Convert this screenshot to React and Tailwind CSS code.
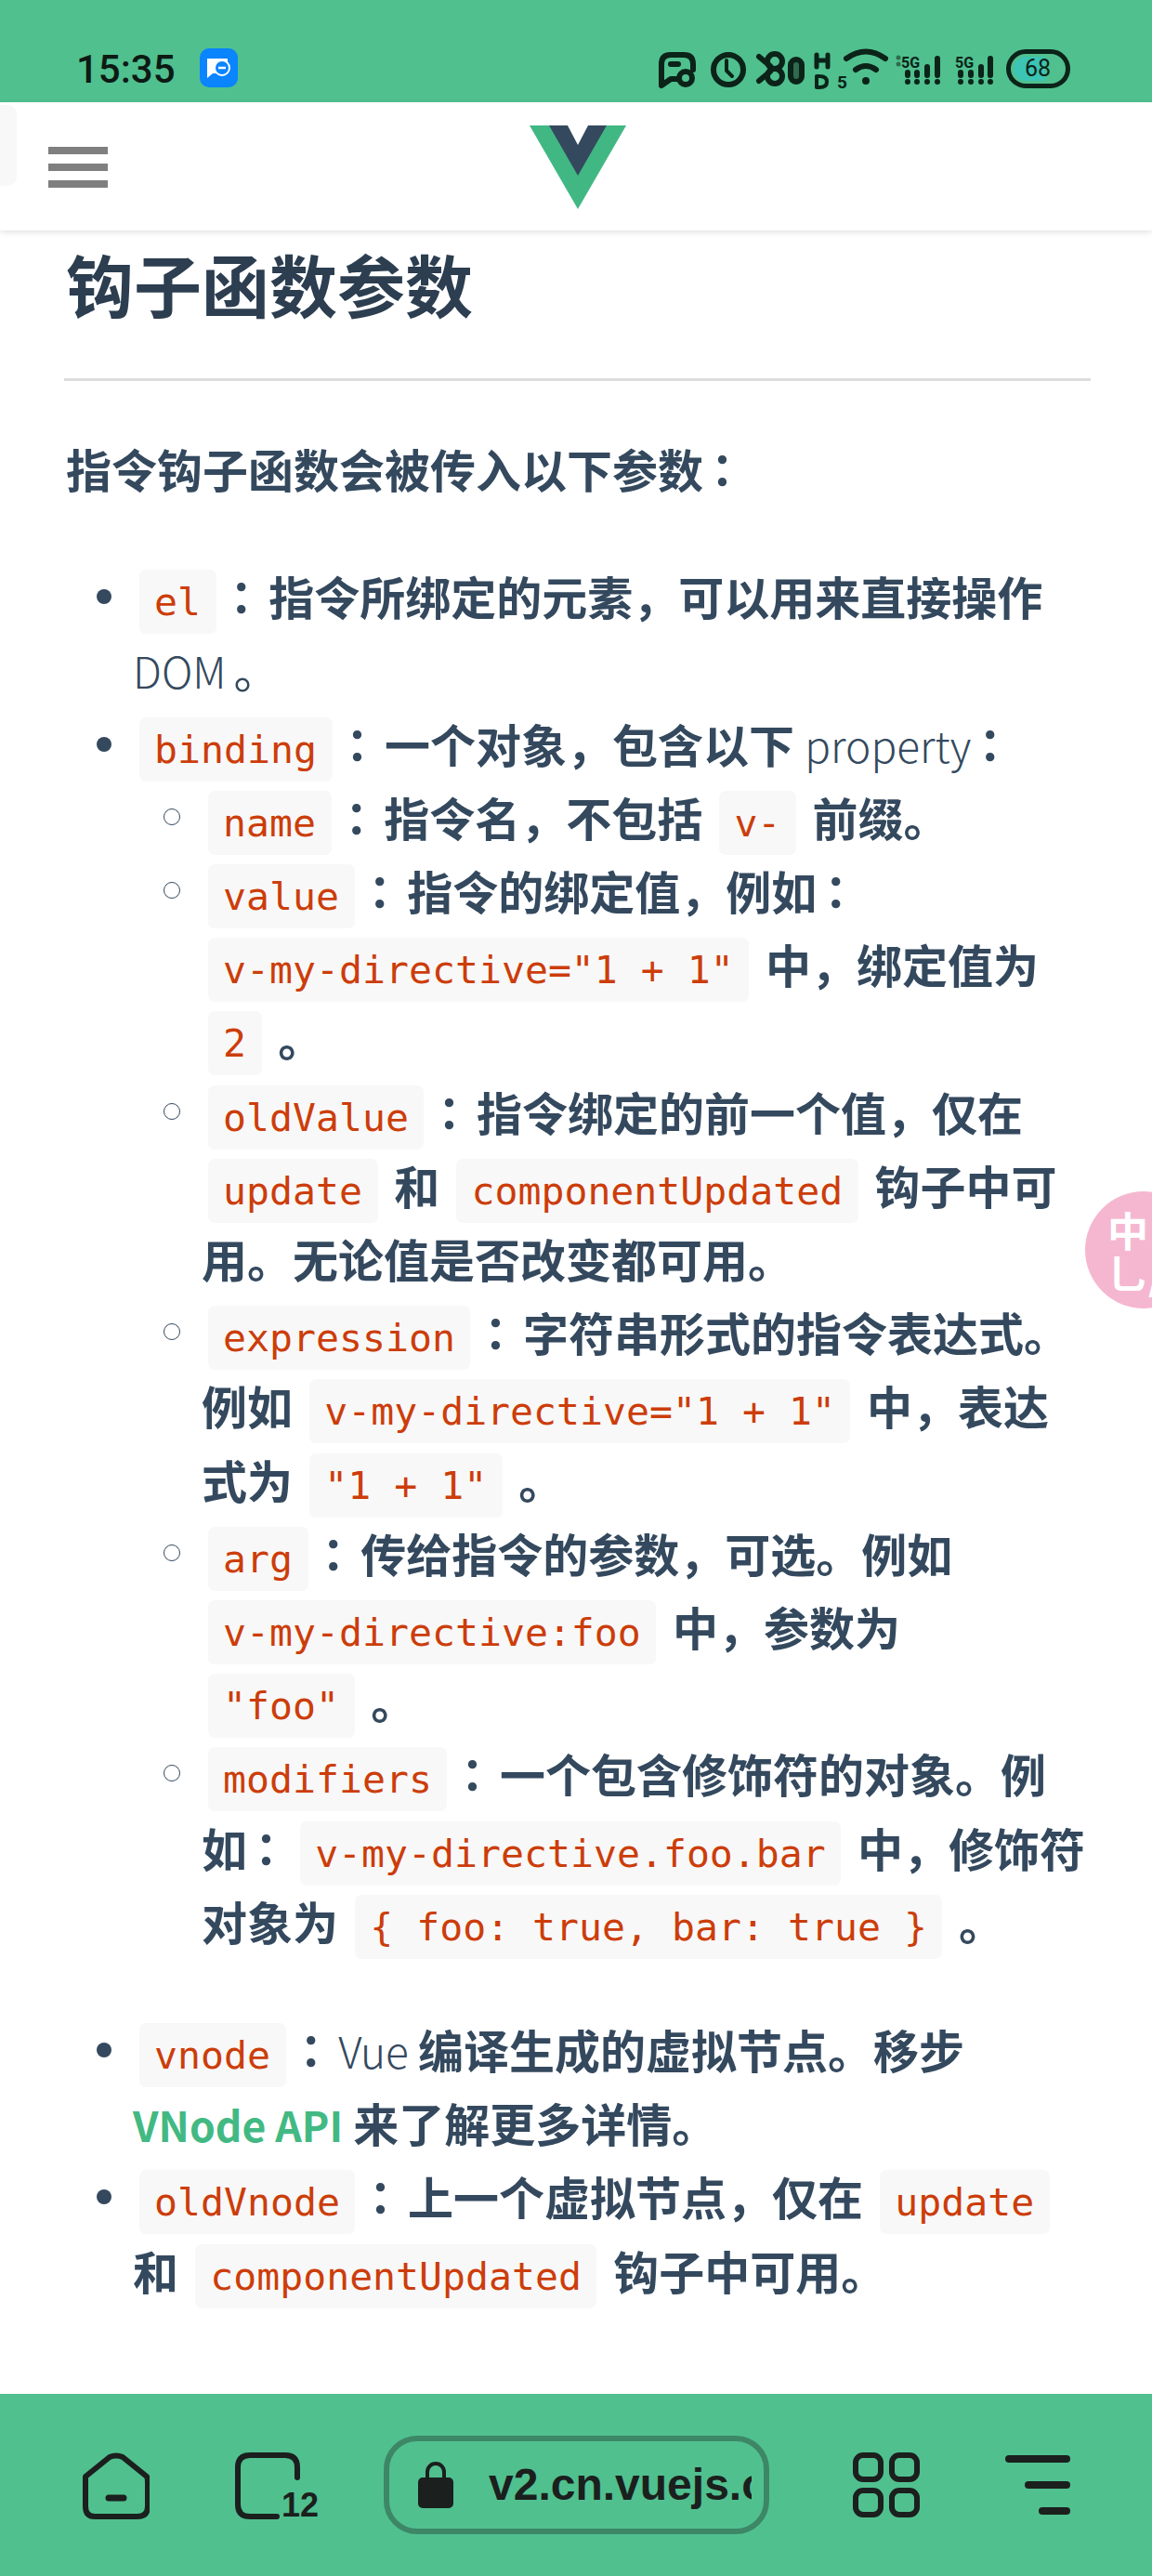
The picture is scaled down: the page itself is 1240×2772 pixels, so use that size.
import React from 'react';

const Code = ({ children }) => (
  <code className="mx-[6.6px] whitespace-pre rounded-[7px] bg-[#f8f8f8] px-[16.5px] py-[10px] font-['DejaVu_Sans_Mono',monospace] text-[41.5px] font-normal leading-none text-[#cc3d0a]">
    {children}
  </code>
);

const B = ({ children }) => <strong className="font-bold">{children}</strong>;

const Thin = ({ children }) => <span className="text-[46px] font-light leading-none">{children}</span>;

// the reference draws the fullwidth colon centred in its cell
const Colon = () => <strong className="ml-[-4px] mr-[5px] font-['Noto_Sans_CJK_TC',sans-serif] font-bold">：</strong>;

const Item = ({ children }) => (
  <li className="relative">
    <span className="absolute left-[-39px] top-[33px] h-[16px] w-[16px] rounded-full bg-[#34495e]" />
    {children}
  </li>
);

const SubItem = ({ children }) => (
  <li className="relative">
    <span className="absolute left-[-41px] top-[31px] h-[18px] w-[18px] rounded-full border-[1.5px] border-[#34495e]" />
    {children}
  </li>
);

const StatusIcons = () => (
  <svg width="368" height="50" viewBox="0 0 368 50" fill="none" stroke="#0b2318" strokeWidth="6" strokeLinecap="round" strokeLinejoin="round">
    {/* chat bubble */}
    <path d="M3 43V20q0-10 10-10h14q10 0 10 10v6M3 43l10-7h7" />
    <path d="M13 20h8" />
    <circle cx="29" cy="35" r="7" />
    {/* alarm */}
    <circle cx="75" cy="26" r="16" />
    <path d="M73 16v11l6 6" strokeWidth="4" />
    {/* do not disturb / vibrate */}
    <circle cx="125" cy="17" r="8" />
    <circle cx="125" cy="33" r="8" />
    <path d="M108 12l12 10M108 38l12-10" />
    <rect x="142" y="15" width="12" height="24" rx="6" fill="#2f6c4f" />
    {/* HD */}
    <path d="M170 10v13M182 10v13M170 16h12" strokeWidth="5" />
    <path d="M170 33v12h3q8 0 8-6t-8-6z" strokeWidth="4" />
    {/* wifi */}
    <path d="M202 14q21-15 42 0M212 26q11-8 22 0" />
    <circle cx="223" cy="38" r="4" fill="#0b2318" stroke="none" />
    <text x="192" y="46" fontFamily="Roboto, sans-serif" fontSize="19" fontWeight="700" fill="#0b2318" stroke="none">5</text>
    {/* signal 1 */}
    <text x="261" y="24" fontFamily="Roboto, sans-serif" fontSize="16" fontWeight="700" fill="#0b2318" stroke="none">5G</text>
    <circle cx="258" cy="13" r="2.500" fill="#2f6c4f" stroke="none" />
    <circle cx="258" cy="20" r="2.500" fill="#2f6c4f" stroke="none" />
    <path d="M268 29v3M278 29v3M289 23v9M300 14v18" />
    <path d="M268 39v.1M278 39v.1M289 39v.1M300 39v.1" />
    {/* signal 2 */}
    <text x="319" y="24" fontFamily="Roboto, sans-serif" fontSize="16" fontWeight="700" fill="#0b2318" stroke="none">5G</text>
    <path d="M325 29v3M336 29v3M347 23v9M357 14v18" />
    <path d="M325 39v.1M336 39v.1M347 39v.1M357 39v.1" />
  </svg>
);

const Battery = () => (
  <div className="relative ml-[6px] h-[42px] w-[69px] rounded-[21px] border-[5px] border-[#0b2318] p-[3px]">
    <div className="h-full w-[34px] rounded-l-[14px] bg-[#3cc4b4]" />
    <span className="absolute inset-0 flex items-center justify-center font-['Roboto',sans-serif] text-[25px] text-[#0b2318]">68</span>
  </div>
);

const StatusBar = () => (
  <div className="flex h-[110px] shrink-0 items-start bg-[#50c08f] pl-[82px] pt-[52px]">
    <span className="font-['Roboto',sans-serif] text-[42px] font-medium leading-[46px] text-[#0d1a14]">15:35</span>
    <div className="ml-[26px] flex h-[42px] w-[41px] items-center justify-center rounded-[10px] bg-[#0a84ff]">
      <svg width="26" height="24" viewBox="0 0 26 24">
        <path d="M1 2h22v16H7l-6 5z" fill="#fff" />
        <circle cx="17" cy="12" r="8" fill="#0a84ff" stroke="#fff" strokeWidth="2" />
        <path d="M13 12h8" stroke="#fff" strokeWidth="2.500" />
      </svg>
    </div>
    <div className="ml-[453px] mt-[-3px] flex items-center">
      <StatusIcons />
      <Battery />
    </div>
  </div>
);

const Header = () => (
  <header className="relative z-10 flex h-[138px] shrink-0 items-start bg-white shadow-[0_2px_6px_rgba(0,0,0,0.12)]">
    <div className="absolute left-0 top-[3px] h-[87px] w-[18px] rounded-r-[10px] bg-[#f8f8f8]" />
    <div className="ml-[52px] mt-[48px] flex w-[64px] flex-col gap-[10px]">
      <div className="h-[8px] bg-[#7f7f7f]" />
      <div className="h-[8px] bg-[#7f7f7f]" />
      <div className="h-[8px] bg-[#7f7f7f]" />
    </div>
    <svg className="ml-[454px] mt-[25px]" width="104" height="90" viewBox="0 0 104 90">
      <path d="M0 0h104L52 90z" fill="#41b883" />
      <path d="M21 0h62L52 54z" fill="#35495e" />
      <path d="M41 0h22L52 21z" fill="#fff" />
    </svg>
  </header>
);

const BottomBar = () => (
  <div className="flex h-[196px] shrink-0 items-start bg-[#50c08f]">
    <svg className="ml-[89px] mt-[63px]" width="72" height="72" viewBox="0 0 72 72" fill="none" stroke="#1b1f1d" strokeWidth="6" strokeLinejoin="round">
      <path d="M3 26 29 5q7-3 14 0l26 21q1 2 1 6v26q0 11-11 11H13Q3 69 3 58V32q0-4 0-6z" />
      <path d="M28 49h16" strokeWidth="7" strokeLinecap="round" />
    </svg>
    <div className="relative ml-[92px] mt-[63px] h-[72px] w-[70px]">
      <svg width="70" height="72" viewBox="0 0 70 72" fill="none" stroke="#1b1f1d" strokeWidth="6" strokeLinecap="round">
        <path d="M67 27V16Q67 3 54 3H16Q3 3 3 16v40q0 13 13 13h29" />
      </svg>
      <span className="absolute left-[50px] top-[39px] font-['Liberation_Sans',sans-serif] text-[36px] font-bold leading-[36px] text-[#1b1f1d]">12</span>
    </div>
    <div className="ml-[90px] mt-[45px] flex h-[106px] w-[415px] items-center overflow-hidden rounded-[36px] border-[6px] border-[#3d8766] pl-[31px]">
      <svg className="shrink-0" width="38" height="50" viewBox="0 0 38 50">
        <path d="M10 22V11a9 9 0 0 1 18 0v11" fill="none" stroke="#1b1f1d" strokeWidth="4" />
        <rect x="0" y="17" width="38" height="33" rx="5" fill="#1b1f1d" />
      </svg>
      <div className="ml-[38px] w-[283px] shrink-0 overflow-hidden whitespace-nowrap font-['Liberation_Sans',sans-serif] text-[48px] font-bold leading-[60px] text-[#1b1f1d]">
        v2.cn.vuejs.org
      </div>
    </div>
    <div className="ml-[90px] mt-[63px] grid h-[70px] w-[72px] grid-cols-2 gap-[6px]">
      <div className="rounded-[11px] border-[6px] border-[#1b1f1d]" />
      <div className="rounded-[11px] border-[6px] border-[#1b1f1d]" />
      <div className="rounded-[11px] border-[6px] border-[#1b1f1d]" />
      <div className="rounded-[11px] border-[6px] border-[#1b1f1d]" />
    </div>
    <div className="ml-[92px] mt-[66px] flex w-[70px] flex-col items-end gap-[20px]">
      <div className="h-[8px] w-[70px] rounded-full bg-[#1b1f1d]" />
      <div className="h-[8px] w-[49px] rounded-full bg-[#1b1f1d]" />
      <div className="h-[8px] w-[34px] rounded-full bg-[#1b1f1d]" />
    </div>
  </div>
);

const Content = () => (
  <main className="relative flex-1 overflow-hidden bg-white pl-[69px] pr-[66px] font-['Noto_Sans_CJK_SC','Noto_Sans',sans-serif] text-[49px] leading-[79.2px] text-[#34495e]">
    <h3 className="h-[162px] border-b-[3px] border-[#dddddd] pl-[2px] pt-[16px] text-[73px] font-bold leading-[80px] text-[#2c3e50]">钩子函数参数</h3>
    <p className="mt-[54px] pl-[2px] font-bold">指令钩子函数会被传入以下参数<Colon /></p>
    <ul className="mt-[58px] whitespace-nowrap pl-[74px]">
      <Item>
        <Code>el</Code><Colon /><B>指令所绑定的元素，可以用来直接操作</B><br />
        <Thin>DOM</Thin><span className="ml-[8px]">。</span>
      </Item>
      <Item>
        <Code>binding</Code><Colon /><B>一个对象，包含以下 </B><Thin>property</Thin><Colon />
        <ul className="pl-[74px]">
          <SubItem><Code>name</Code><Colon /><B>指令名，不包括 </B><Code>v-</Code><B> 前缀。</B></SubItem>
          <SubItem>
            <Code>value</Code><Colon /><B>指令的绑定值，例如</B><Colon /><br />
            <Code>v-my-directive="1 + 1"</Code><B> 中，绑定值为</B><br />
            <Code>2</Code><B> 。</B>
          </SubItem>
          <SubItem>
            <Code>oldValue</Code><Colon /><B>指令绑定的前一个值，仅在</B><br />
            <Code>update</Code><B> 和 </B><Code>componentUpdated</Code><B> 钩子中可</B><br />
            <B>用。无论值是否改变都可用。</B>
          </SubItem>
          <SubItem>
            <Code>expression</Code><Colon /><B>字符串形式的指令表达式。</B><br />
            <B>例如 </B><Code>v-my-directive="1 + 1"</Code><B> 中，表达</B><br />
            <B>式为 </B><Code>"1 + 1"</Code><B> 。</B>
          </SubItem>
          <SubItem>
            <Code>arg</Code><Colon /><B>传给指令的参数，可选。例如</B><br />
            <Code>v-my-directive:foo</Code><B> 中，参数为</B><br />
            <Code>"foo"</Code><B> 。</B>
          </SubItem>
          <SubItem>
            <Code>modifiers</Code><Colon /><B>一个包含修饰符的对象。例</B><br />
            <B>如</B><Colon /><Code>v-my-directive.foo.bar</Code><B> 中，修饰符</B><br />
            <B>对象为 </B><Code>{'{ foo: true, bar: true }'}</Code><B> 。</B>
          </SubItem>
        </ul>
      </Item>
    </ul>
    <ul className="mt-[59px] whitespace-nowrap pl-[74px]">
      <Item>
        <Code>vnode</Code><Colon /><Thin>Vue </Thin><B>编译生成的虚拟节点。移步</B><br />
        <span className="text-[44.5px] font-semibold leading-none text-[#42b983]">VNode API</span><B> 来了解更多详情。</B>
      </Item>
      <Item>
        <Code>oldVnode</Code><Colon /><B>上一个虚拟节点，仅在 </B><Code>update</Code><br />
        <B>和 </B><Code>componentUpdated</Code><B> 钩子中可用。</B>
      </Item>
    </ul>
  </main>
);

export default function App() {
  return (
    <div className="relative flex h-[2772px] w-[1240px] flex-col overflow-hidden bg-white">
      <StatusBar />
      <Header />
      <Content />
      <BottomBar />
      <div className="absolute left-[1168px] top-[1282px] flex h-[126px] w-[126px] flex-col items-start rounded-full bg-[#f5b7d0] pl-[24px] pt-[18px] font-['Noto_Sans_CJK_SC',sans-serif] text-[44px] font-bold leading-[46px] text-white">
        <span>中</span>
        <span className="whitespace-nowrap">乚/</span>
      </div>
    </div>
  );
}
